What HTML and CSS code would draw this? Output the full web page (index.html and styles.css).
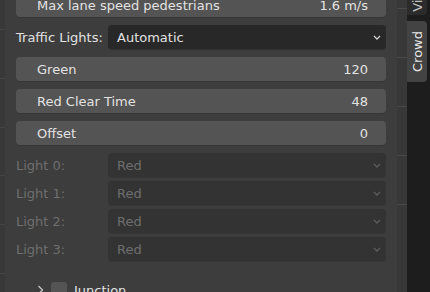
FILE: index.html
```html
<!DOCTYPE html>
<html lang="en">
  <head>
    <meta charset="UTF-8" />
    <title>Crowd Panel</title>
    <link rel="stylesheet" href="styles.css">
  </head>
  <body>
    <div class="edge"></div>

    <div class="panel">
      <div class="slot first">
        <span>Max lane speed pedestrians</span>
        <span>1.6 m/s</span>
      </div>

      <div class="prop-row">
        <div class="prop-label">Traffic Lights:</div>
        <div class="dropdown">
          <span>Automatic</span>
          <svg class="chev" width="8" height="5" viewBox="0 0 8 5">
            <path d="M1 1l3 3 3-3" fill="none" stroke="currentColor" stroke-width="1.3" />
          </svg>
        </div>
      </div>

      <div class="slot"><span>Green</span><span>120</span></div>
      <div class="slot"><span>Red Clear Time</span><span>48</span></div>
      <div class="slot"><span>Offset</span><span>0</span></div>

      <div class="lights">
        <div class="prop-row disabled">
          <div class="prop-label">Light 0:</div>
          <div class="dropdown">
            <span>Red</span>
            <svg class="chev" width="8" height="5" viewBox="0 0 8 5"><path d="M1 1l3 3 3-3" fill="none" stroke="currentColor" stroke-width="1.3" /></svg>
          </div>
        </div>
        <div class="prop-row disabled">
          <div class="prop-label">Light 1:</div>
          <div class="dropdown">
            <span>Red</span>
            <svg class="chev" width="8" height="5" viewBox="0 0 8 5"><path d="M1 1l3 3 3-3" fill="none" stroke="currentColor" stroke-width="1.3" /></svg>
          </div>
        </div>
        <div class="prop-row disabled">
          <div class="prop-label">Light 2:</div>
          <div class="dropdown">
            <span>Red</span>
            <svg class="chev" width="8" height="5" viewBox="0 0 8 5"><path d="M1 1l3 3 3-3" fill="none" stroke="currentColor" stroke-width="1.3" /></svg>
          </div>
        </div>
        <div class="prop-row disabled">
          <div class="prop-label">Light 3:</div>
          <div class="dropdown">
            <span>Red</span>
            <svg class="chev" width="8" height="5" viewBox="0 0 8 5"><path d="M1 1l3 3 3-3" fill="none" stroke="currentColor" stroke-width="1.3" /></svg>
          </div>
        </div>
      </div>

      <div class="subpanel">
        <svg class="expand" width="7" height="10" viewBox="0 0 7 10">
          <path d="M1.5 1l4 4-4 4" fill="none" stroke="currentColor" stroke-width="1.3" />
        </svg>
        <div class="checkbox"></div>
        <span>Junction</span>
      </div>
    </div>

    <div class="gutter"></div>

    <div class="tabs">
      <div class="tab other"><span>View</span></div>
      <div class="tab active"><span>Crowd</span></div>
    </div>
  </body>
</html>
```

FILE: styles.css
```css
* {
  margin: 0;
  padding: 0;
  box-sizing: border-box;
}

body {
  width: 430px;
  height: 292px;
  overflow: hidden;
  display: flex;
  background: #3d3d3d;
  font-family: "DejaVu Sans", sans-serif;
  font-size: 13px;
  color: #e2e2e2;
}

/* thin strip at the left edge, with row ticks */
.edge {
  width: 5px;
  flex-shrink: 0;
  background: repeating-linear-gradient(
    to bottom,
    #383838 0px,
    #383838 29px,
    #444444 29px,
    #444444 30px,
    #383838 30px,
    #383838 48.8px
  );
}

.panel {
  flex: 1;
  padding: 0 11px;
  display: flex;
  flex-direction: column;
}

.slot {
  height: 24px;
  margin-top: 8px;
  background: #545454;
  border-radius: 4px;
  box-shadow: 0 1px 0 #353535;
  display: flex;
  align-items: center;
  justify-content: space-between;
  padding: 0 18px 0 21px;
  flex-shrink: 0;
}

.slot.first {
  margin-top: -7px;
}

.prop-row {
  display: flex;
  align-items: center;
  margin-top: 8px;
  height: 24px;
  flex-shrink: 0;
}

.prop-label {
  width: 92px;
  flex-shrink: 0;
}

.dropdown {
  flex: 1;
  height: 24px;
  background: #282828;
  border-radius: 4px;
  box-shadow: 0 1px 0 #303030;
  display: flex;
  align-items: center;
  justify-content: space-between;
  padding: 0 5px 0 9px;
}

.chev {
  color: #d0d0d0;
}

.lights .prop-row {
  margin-top: 4px;
}

.lights .prop-row:first-child {
  margin-top: 8px;
}

.disabled .prop-label,
.disabled .dropdown span {
  color: #6e6e6e;
}

.disabled .dropdown {
  background: #333333;
  box-shadow: 0 1px 0 #363636;
}

.disabled .chev {
  color: #5c5c5c;
}

.subpanel {
  display: flex;
  align-items: center;
  gap: 7px;
  margin-top: 21px;
  padding-left: 21px;
}

.expand {
  color: #c8c8c8;
}

.checkbox {
  width: 16px;
  height: 16px;
  background: #545454;
  border-radius: 3px;
}

.gutter {
  width: 10px;
  flex-shrink: 0;
  background: repeating-linear-gradient(
    to bottom,
    #383838 0px,
    #383838 28px,
    #4a4a4a 28px,
    #4a4a4a 29px,
    #383838 29px,
    #383838 48.9px
  );
  background-position: 0 -20px;
}

.tabs {
  width: 23px;
  flex-shrink: 0;
  background: #1d1d1d;
  display: flex;
  flex-direction: column;
  gap: 6px;
  padding-right: 3px;
}

.tab {
  width: 20px;
  border-radius: 0 4px 4px 0;
  display: flex;
  align-items: center;
  justify-content: center;
  overflow: hidden;
}

.tab span {
  writing-mode: vertical-rl;
  transform: rotate(180deg);
  font-size: 13px;
}

.tab.other {
  height: 15px;
  background: #2b2b2b;
  color: #c0c0c0;
  align-items: flex-end;
  border-radius: 0 0 4px 0;
}

.tab.other span {
  padding-top: 3px;
}

.tab.active {
  height: 61px;
  background: #434343;
  color: #e6e6e6;
}
```
